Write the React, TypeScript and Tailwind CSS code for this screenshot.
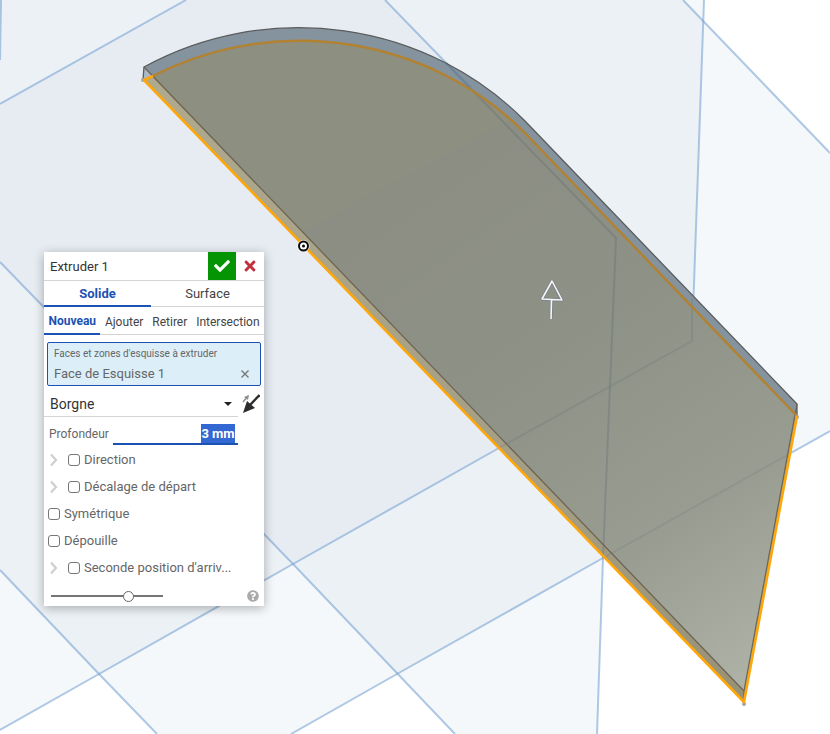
import { useState } from "react";
import { FaCheck, FaTimes, FaQuestionCircle } from "react-icons/fa";

const operations = [
    { id: "new", label: "Nouveau" },
    { id: "add", label: "Ajouter" },
    { id: "remove", label: "Retirer" },
    { id: "intersect", label: "Intersection" },
];

const options = [
    { id: "direction", label: "Direction", expandable: true },
    { id: "offset", label: "Décalage de départ", expandable: true },
    { id: "symmetric", label: "Symétrique", expandable: false },
    { id: "draft", label: "Dépouille", expandable: false },
    { id: "second", label: "Seconde position d'arriv...", expandable: true },
];

const Viewport = () => (
    <svg
        className="absolute inset-0 h-full w-full"
        viewBox="0 0 830 734"
        preserveAspectRatio="xMidYMid slice"
        aria-hidden="true"
    >
        <defs>
            <linearGradient id="face" gradientUnits="userSpaceOnUse" x1="420" y1="180" x2="760" y2="690">
                <stop offset="0" stopColor="#8c8e83" />
                <stop offset="0.35" stopColor="#8e9186" />
                <stop offset="0.7" stopColor="#999c91" />
                <stop offset="1" stopColor="#b0b3a8" />
            </linearGradient>
            <linearGradient id="side" gradientUnits="userSpaceOnUse" x1="145" y1="75" x2="744" y2="700">
                <stop offset="0" stopColor="#afa98e" />
                <stop offset="0.7" stopColor="#a39d83" />
                <stop offset="1" stopColor="#979176" />
            </linearGradient>
        </defs>

        {/* reference planes, darker where they overlap */}
        <rect width="830" height="734" fill="#f4f8fb" />
        <g fill="#fff">
            <path d="M704 0L703 21L830 153V0Z" />
            <path d="M830 431L603 558L597 734H830Z" />
            <path d="M0 730L99 674L157 734H0Z" />
            <path d="M291 734L397 674L455 734Z" />
        </g>
        <g fill="#ecf1f5">
            <path d="M0 0H186L0 104Z" />
            <path d="M0 262L293 564L99 674L0 570Z" />
            <path d="M293 564L606 388L603 558L397 674Z" />
            <path d="M385 0H683L703 21L692 341L606 388L616 238Z" />
        </g>
        <path d="M186 0H385L616 238L606 388L293 564L0 262V104Z" fill="#e7ecf3" />
        <g fill="none" stroke="#6f9dd0" strokeOpacity="0.55" strokeWidth="2">
            <path d="M0 104L186 0" />
            <path d="M1 0L0 60" />
            <path d="M385 0L616 238L603 558L597 734" />
            <path d="M683 0L830 153" />
            <path d="M704 0L692 341L499 448L293 564L99 674L0 730" />
            <path d="M0 262L293 564L455 734" />
            <path d="M0 570L99 674L157 734" />
            <path d="M830 431L603 558L397 674L291 734" />
        </g>

        {/* extruded body */}
        <path d="M144 67A310 295 0 0 1 525 121L797 404V416L744 703L143 80Z" fill="#84939d" />
        <path d="M144 67L153 76L143 80Z" fill="#a9bac7" />
        <path d="M143 80L153 76L744 691V703Z" fill="url(#side)" />
        <path d="M153 76A310 295 0 0 1 525 133L796 415L744 691Z" fill="url(#face)" />
        <path d="M153 76A310 295 0 0 1 500 110L510 120L303 231Z" fill="#8f917f" fillOpacity="0.4" />
        <g fill="none" stroke="#5b6b70" strokeOpacity="0.3" strokeWidth="2">
            <path d="M446 63L616 238L603 558" />
            <path d="M692 298V341L499 448" strokeOpacity="0.18" />
            <path d="M603 558L791 453" strokeOpacity="0.15" />
        </g>
        <path d="M446 63L470 87" stroke="#5580b0" strokeOpacity="0.35" strokeWidth="2" />
        <g fill="none" stroke="#5a5c5c">
            <path d="M143 80L144 67A310 295 0 0 1 525 121L797 404V416" strokeWidth="1.3" />
            <path d="M144 67L744 691V700" stroke="#6d6452" strokeWidth="1.3" />
            <path d="M797 404L744 691" stroke="#6b6759" strokeWidth="1.3" />
        </g>
        <path d="M153 76A310 295 0 0 1 525 133L797 416" fill="none" stroke="#b28230" strokeWidth="2.400" />
        <circle cx="143" cy="80" r="2" fill="#a7a4a0" />
        <circle cx="744" cy="704" r="2" fill="#a7a4a0" />
        <circle cx="797" cy="417" r="2" fill="#a7a4a0" />
        <path d="M153 76L144 80L744 702L797 416" fill="none" stroke="#ffa60a" strokeWidth="2.6" strokeLinejoin="round" />

        {/* origin */}
        <circle cx="303.500" cy="246" r="6" fill="#fff" />
        <circle cx="303.500" cy="246" r="4.500" fill="#fff" stroke="#0a0a0a" strokeWidth="2" />
        <circle cx="303.500" cy="246" r="1.500" fill="#0a0a0a" />

        {/* depth handle */}
        <g fill="none" strokeLinejoin="round">
            <path d="M552 281L542 299L562 300ZM551.500 300L551 319" stroke="#6c7580" strokeOpacity="0.6" strokeWidth="3" />
            <path d="M552 281L542 299L562 300ZM551.500 300L551 319" stroke="#f4f7fb" strokeWidth="1.600" />
        </g>
    </svg>
);

const Chevron = () => (
    <svg width="8" height="14" viewBox="0 0 8 14" fill="none" stroke="#cfcfcf" strokeWidth="2.200">
        <path d="M1 1.500L6 7L1 12.500" />
    </svg>
);

const FlipArrow = () => (
    <svg width="18" height="20" viewBox="0 0 18 20">
        <path d="M1 8L6 2" stroke="#8f8f8f" strokeWidth="1.500" />
        <path d="M7 1L2 3L6 6Z" fill="#8f8f8f" />
        <path d="M17.500 1L8 11" stroke="#2d2d2d" strokeWidth="2.400" />
        <path d="M1 19L5 7L13 14Z" fill="#2d2d2d" />
    </svg>
);

const ExtrudePanel = () => {
    const [operation, setOperation] = useState("new");
    const [depth, setDepth] = useState("3 mm");

    return (
        <section className="absolute left-11 top-[252px] w-[220px] bg-white/98 text-[13px] leading-4 text-[#666] shadow-[0_2px_10px_rgba(0,0,0,0.3)]">
            <header className="flex h-7 items-stretch">
                <h1 className="flex-1 self-center pl-1.5 pt-px text-[#333]">Extruder 1</h1>
                <button type="button" aria-label="Valider" className="flex w-7 items-center justify-center bg-[#049404] text-white">
                    <FaCheck size={16} />
                </button>
                <button type="button" aria-label="Annuler" className="flex w-7 items-center justify-center text-[#c22f3d]">
                    <FaTimes size={16} />
                </button>
            </header>

            <div className="flex h-[27px] border-y border-[#d4d4d4] text-[#444]">
                <button type="button" className="-mb-px w-[107px] border-b-2 border-[#1b52b3] pt-px font-bold text-[#1b52b3]">Solide</button>
                <button type="button" className="flex-1">Surface</button>
            </div>

            <div className="flex h-7 border-b border-[#d4d4d4] text-[#444]">
                {operations.map((item) => (
                    <button
                        type="button"
                        key={item.id}
                        onClick={() => setOperation(item.id)}
                        className={`-mb-px flex-auto pt-0.5 text-xs ${operation === item.id ? "border-b-2 border-[#1b52b3] font-bold text-[#1b52b3]" : ""}`}
                    >
                        {item.label}
                    </button>
                ))}
            </div>

            <div className="mx-[3px] mt-[7px] h-11 rounded-xs border border-[#1b52b3] bg-[#dceff9] px-1.5 pt-[3px]">
                <p className="text-[10px]">Faces et zones d'esquisse à extruder</p>
                <div className="mt-1 flex items-center justify-between">
                    <span>Face de Esquisse 1</span>
                    <button type="button" aria-label="Retirer la face" className="mr-1">
                        <svg width="10" height="10" viewBox="0 0 10 10" stroke="#777" strokeWidth="1.400">
                            <path d="M1.500 1.500L8.500 8.500M8.500 1.500L1.500 8.500" />
                        </svg>
                    </button>
                </div>
            </div>

            <div className="flex h-[31px] items-stretch">
                <div className="relative w-[194px] border-b border-[#d4d4d4]">
                    <select aria-label="Type de fin" className="h-full w-full appearance-none pl-1.5 pt-1.5 text-sm text-[#333]">
                        <option>Borgne</option>
                    </select>
                    <svg className="pointer-events-none absolute right-1.5 top-4" width="8" height="4" viewBox="0 0 8 4">
                        <path d="M0 0H8L4 4Z" fill="#222" />
                    </svg>
                </div>
                <button type="button" aria-label="Inverser la direction" className="flex-1 pl-1 pt-1">
                    <FlipArrow />
                </button>
            </div>

            <div className="mr-[26px] flex h-7 items-end pl-[5px]">
                <label htmlFor="depth" className="flex-1 pb-[3px] text-xs">Profondeur</label>
                <div className="flex w-[125px] justify-end border-b-2 border-[#1b52b3] pr-[3px]">
                    <input
                        id="depth"
                        value={depth}
                        onChange={(e) => setDepth(e.target.value)}
                        className="h-[19px] w-[34px] bg-[#3367d1] text-center font-bold text-white outline-none"
                    />
                </div>
            </div>

            <ul className="pt-px">
                {options.map((item) => (
                    <li key={item.id} className="flex h-[27px] items-center pl-1">
                        {item.expandable && (
                            <button type="button" aria-label={`Développer ${item.label}`} className="w-5 pl-0.5">
                                <Chevron />
                            </button>
                        )}
                        <label className="flex items-center gap-1">
                            <input type="checkbox" className="size-3 appearance-none rounded-[3px] border border-[#767676] bg-white checked:bg-[#1b52b3]" />
                            {item.label}
                        </label>
                    </li>
                ))}
            </ul>

            <footer className="flex h-[25px] items-center justify-between pl-[7px] pr-[5px] pt-1">
                <input
                    type="range"
                    aria-label="Opacité"
                    defaultValue={71}
                    className="h-3 w-28 appearance-none bg-transparent [&::-webkit-slider-runnable-track]:h-0.5 [&::-webkit-slider-runnable-track]:bg-[#757575] [&::-webkit-slider-thumb]:-mt-1 [&::-webkit-slider-thumb]:size-[11px] [&::-webkit-slider-thumb]:appearance-none [&::-webkit-slider-thumb]:rounded-full [&::-webkit-slider-thumb]:border [&::-webkit-slider-thumb]:border-[#666] [&::-webkit-slider-thumb]:bg-white"
                />
                <button type="button" aria-label="Aide" className="text-[#aaa]">
                    <FaQuestionCircle size={12} />
                </button>
            </footer>
        </section>
    );
};

const App = () => {
    return (
        <main className="relative min-h-screen overflow-hidden bg-white font-['Roboto',sans-serif]">
            <Viewport />
            <ExtrudePanel />
        </main>
    );
};

export default App;
